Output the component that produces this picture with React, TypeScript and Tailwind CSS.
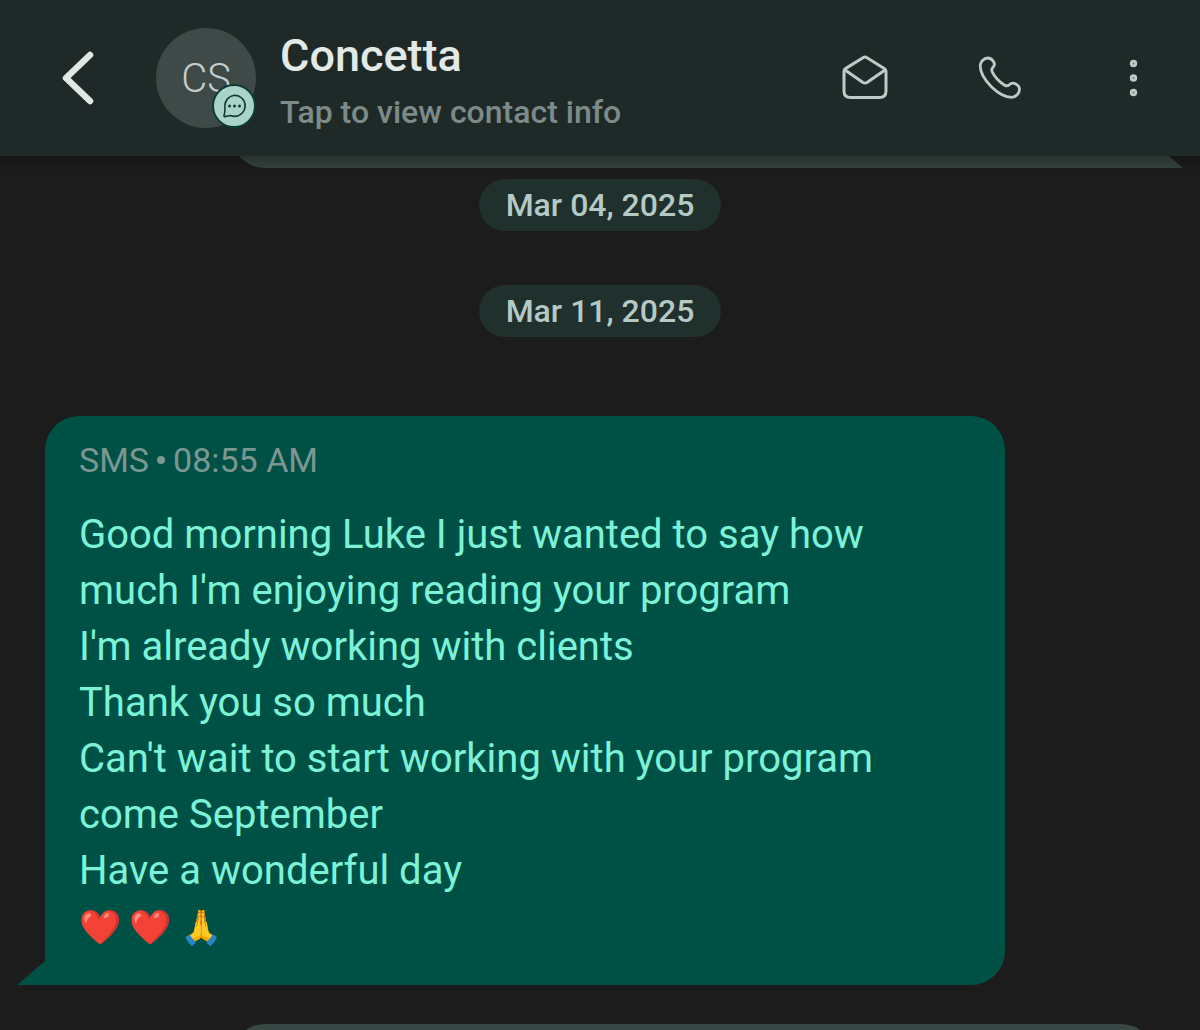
import React from "react";

const LINES = [
  "Good morning Luke I just wanted to say how much I'm enjoying reading your program",
  "I'm already working with clients",
  "Thank you so much",
  "Can't wait to start working with your program come September",
  "Have a wonderful day",
];

function BackIcon() {
  return (
    <svg viewBox="0 0 36 56" className="h-14 w-9" fill="none" stroke="currentColor" strokeWidth="6.500" strokeLinecap="round" strokeLinejoin="round" aria-hidden="true">
      <path d="M30 5 6 28l24 23" />
    </svg>
  );
}

function MailIcon() {
  return (
    <svg viewBox="0 0 48 48" className="size-12" fill="none" stroke="currentColor" strokeWidth="3" strokeLinejoin="round" strokeLinecap="round" aria-hidden="true">
      <path d="M3 17.500c0-1.600.5-2.300 1.800-3.100L22 3.700c1.500-.9 2.500-.9 4 0l17.200 10.700c1.300.8 1.800 1.500 1.800 3.100V37c0 4.500-2 6.500-6.500 6.500h-29C5 43.500 3 41.500 3 37Z" />
      <path d="M4 16l18 12.500c1.500.9 2.500.9 4 0L44 16" />
    </svg>
  );
}

function PhoneIcon() {
  return (
    <svg viewBox="0 0 48 48" className="size-12" fill="none" stroke="currentColor" strokeWidth="2.800" strokeLinejoin="round" strokeLinecap="round" aria-hidden="true">
      <path d="M5.200 11.500C5.200 8 8.800 4 12.800 4c2.500 0 4.200 1.200 5.500 3.200 1.500 2.300 1.500 4.300-.2 6-1.500 1.500-1.800 2.700-1 4.400 2.600 5.400 7.200 10.300 12.600 13.600 1.700 1 2.900.9 4.400-.3 2-1.900 4-2.300 6.200-1.100 2.700 1.400 4.200 3.200 4.200 5.500 0 4-3.800 8-7.800 8C24.500 43.300 5.200 25.500 5.200 11.500Z" />
    </svg>
  );
}

function MoreIcon() {
  return (
    <svg viewBox="0 0 48 48" className="size-12" fill="#6f7f7b" stroke="currentColor" strokeWidth="2.800" aria-hidden="true">
      <circle cx="24.500" cy="9.500" r="2.300" />
      <circle cx="24.500" cy="24" r="2.300" />
      <circle cx="24.500" cy="38.500" r="2.300" />
    </svg>
  );
}

function ChatBadge() {
  return (
    <span className="absolute right-0 bottom-0 flex size-11 items-center justify-center rounded-full border-2 border-[#0a3b33] bg-[#a9d3c8] text-[#123a33]">
      <svg viewBox="0 0 24 24" className="size-6" fill="none" stroke="currentColor" strokeWidth="1.600" strokeLinejoin="round" aria-hidden="true">
        <path d="M12.500 1.200a10.600 10.600 0 1 1 0 21.200c-1.600 0-3-.3-4.300-.9l-5.400 1.100c-.6.100-.9-.3-.8-.8l.9-4.500V11.800A10.600 10.600 0 0 1 12.500 1.200Z" />
        <g fill="currentColor" stroke="none">
          <circle cx="7.500" cy="12" r="1.500" />
          <circle cx="12.500" cy="12" r="1.500" />
          <circle cx="17.500" cy="12" r="1.500" />
        </g>
      </svg>
    </span>
  );
}

function DateChip({ children }: { children: React.ReactNode }) {
  return (
    <time className="flex h-13 min-w-[242px] items-center justify-center self-center rounded-full bg-[#20302d] px-5 text-[32px] leading-none font-medium text-[#b5c9c5]">
      {children}
    </time>
  );
}

export default function App() {
  return (
    <div className="flex h-screen flex-col overflow-hidden bg-[#1b1c1b] font-[Roboto,sans-serif]">
      <header className="relative z-10 flex h-39 shrink-0 items-center bg-[#1f2a28] shadow-[0_4px_12px_rgba(0,0,0,0.35)]">
        <button type="button" aria-label="Back" className="ml-[60px] text-[#e0e7e5]">
          <BackIcon />
        </button>
        <button type="button" className="ml-15 flex flex-1 items-center text-left">
          <span className="relative flex size-25 shrink-0 items-center justify-center rounded-full bg-[#3f4947] pt-0.5 text-[40px] font-light text-[#c3cdca]">
            CS
            <ChatBadge />
          </span>
          <span className="ml-6 flex flex-col gap-3 pt-[7px]">
            <span className="text-[45px] leading-12 font-medium text-[#e3e9e7]">Concetta</span>
            <span className="text-[32px] leading-10 font-medium text-[#7d8b88]">Tap to view contact info</span>
          </span>
        </button>
        <nav className="mr-[43px] flex items-center gap-[86px] text-[#bdcbc8]">
          <button type="button" aria-label="Mark as read"><MailIcon /></button>
          <button type="button" aria-label="Call"><PhoneIcon /></button>
          <button type="button" aria-label="More options"><MoreIcon /></button>
        </nav>
      </header>

      <main className="flex flex-1 flex-col overflow-hidden">
        <div className="flex h-3 shrink-0 items-end justify-end overflow-hidden pr-[45px]">
          <div className="relative h-20 w-4/5 shrink-0 rounded-bl-[34px] bg-[#34433f]">
            <span className="absolute bottom-0 left-full h-6 w-7 bg-[#34433f] [clip-path:polygon(0_0,100%_100%,0_100%)]" />
          </div>
        </div>

        <div className="mt-[11px] flex shrink-0 flex-col gap-[54px]">
          <DateChip>Mar 04, 2025</DateChip>
          <DateChip>Mar 11, 2025</DateChip>
        </div>

        <article className="relative mt-[79px] ml-[45px] w-4/5 shrink-0 rounded-[34px] rounded-bl-none bg-[#005145] px-[34px] pt-6 pb-[30px]">
          <span className="absolute right-full bottom-0 h-6 w-7 bg-[#005145] [clip-path:polygon(100%_0,100%_100%,0_100%)]" />
          <p className="flex items-center gap-2 text-[34px] leading-10 text-[#7c9692]">
            SMS
            <span className="size-2 rounded-full bg-[#7c9692]" />
            08:55 AM
          </p>
          <div className="mt-[27px] text-[40px] leading-14 text-[#7cf3d8]">
            {LINES.map((line) => (
              <p key={line}>{line}</p>
            ))}
            <p className="text-[34px] leading-14">❤️ ❤️ 🙏</p>
          </div>
        </article>

        <div className="mt-[39px] mr-[45px] h-20 w-[77%] shrink-0 self-end rounded-t-[34px] bg-[#384845]" />
      </main>
    </div>
  );
}
